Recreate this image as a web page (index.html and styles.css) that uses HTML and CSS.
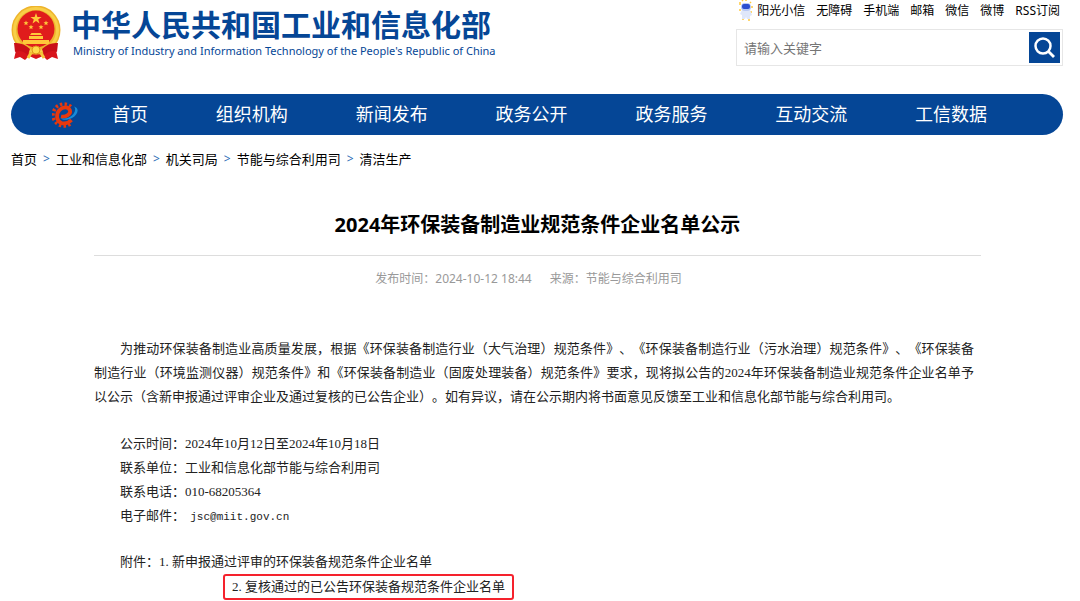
FILE: index.html
```
<!DOCTYPE html>
<html lang="zh-CN">
<head>
    <meta charset="UTF-8">
    <meta name="viewport" content="width=device-width, initial-scale=1.0">
    <title>2024年环保装备制造业规范条件企业名单公示</title>
    <link rel="stylesheet" href="styles.css">
</head>
<body>
    <header class="header">
        <a class="logo" href="#">
            <svg class="emblem" viewBox="0 0 50 54" aria-hidden="true">
                <path d="M7 36 L3 53 L9 51 L14 54 L18 50 L25 53 L32 50 L36 54 L41 51 L47 53 L43 36 Z" fill="#d8141c"/>
                <circle cx="25" cy="24" r="24.5" fill="#eeb42c"/>
                <circle cx="25" cy="24" r="21.500" fill="none" stroke="#f8cf48" stroke-width="3"/>
                <circle cx="25" cy="23" r="18.5" fill="#e01c1c"/>
                <path d="M25 7 L26.4 11 L30.6 11 L27.2 13.5 L28.5 17.5 L25 15 L21.5 17.5 L22.8 13.5 L19.4 11 L23.6 11 Z" fill="#ffc83a"/>
                <g fill="#ffc83a">
                    <path id="star" d="M15 14.500l.7 1.700h1.800l-1.400 1.200.5 1.900-1.600-1.100-1.600 1.100.5-1.900-1.400-1.200h1.800z"/>
                    <use href="#star" x="20"/>
                    <use href="#star" x="5" y="4"/>
                    <use href="#star" x="15" y="4"/>
                    <path d="M19 29 L20.500 27 H29.500 L31 29 Z M18 30 H32 V33 H18 Z M12 34 H38 V38 H12 Z"/>
                </g>
                <path d="M3 37 Q12 36 19 43 L17 49 Q10 43 4 46 Z M47 37 Q38 36 31 43 L33 49 Q40 43 46 46 Z" fill="#c90f18"/>
                <circle cx="25" cy="44" r="4" fill="#ffd84a" stroke="#e0951c"/>
                <path d="M20 47 L17 52 M30 47 L33 52" stroke="#f7c73a" stroke-width="3"/>
            </svg>
            <span class="logo-text">
                <strong>中华人民共和国工业和信息化部</strong>
                <span class="logo-en">Ministry of Industry and Information Technology of the People's Republic of China</span>
            </span>
        </a>
        <div class="header-right">
            <ul class="top-links">
                <li>
                    <a href="#">
                        <svg class="mascot" viewBox="0 0 14 22" aria-hidden="true">
                            <path d="M1 5V2M3 1l1-1M7 1V0M11 2l1 1M13 6v2M1 9v2M12 11v2M4 18v2M10 18v3" stroke="#ffc93c" stroke-width="1.500"/>
                            <path d="M3 10h8l2 5-2 1v3H8l-1-2-1 2H3v-4l-2-1z" fill="#dfe7fa"/>
                            <rect x="2" y="3" width="10" height="8" rx="4" fill="#b9c9f5"/>
                            <rect x="3" y="4" width="8" height="5" rx="2" fill="#2c4fd0"/>
                        </svg>阳光小信</a>
                </li>
                <li><a href="#">无障碍</a></li>
                <li><a href="#">手机端</a></li>
                <li><a href="#">邮箱</a></li>
                <li><a href="#">微信</a></li>
                <li><a href="#">微博</a></li>
                <li><a href="#">RSS订阅</a></li>
            </ul>
            <form class="search">
                <input type="text" placeholder="请输入关键字" aria-label="请输入关键字">
                <button type="button" aria-label="搜索">
                    <svg viewBox="0 0 31 31" aria-hidden="true">
                        <circle cx="14" cy="14" r="7.500" fill="none" stroke="#fff" stroke-width="2.500"/>
                        <path d="M19.500 19.500L25 25" stroke="#fff" stroke-width="2.800"/>
                    </svg>
                </button>
            </form>
        </div>
    </header>

    <nav class="nav">
        <svg class="nav-logo" viewBox="0 0 26 26" fill="none" aria-hidden="true">
            <path d="M19 4.500 A11 11 0 1 0 19 21.500" stroke="#e8380d" stroke-width="3.500" stroke-dasharray="2.400 2.200"/>
            <path d="M9 14.500 C14 15.500 19 12 18 8.500 C16.500 4.500 11 4.500 7.500 8 C3.500 12.500 4.500 19 9.500 21 C13 22.300 16.500 21 19.500 18" stroke="#e8380d" stroke-width="3.800"/>
            <path d="M22 4.500 C28 6 26 13 20 16 C16 18 11 18.500 9 16.500 C15 17 20 14.500 22 11 C23.500 8.500 23.500 6 22 4.500 Z" fill="#168bd8"/>
        </svg>
        <a class="home" href="#">首页</a>
        <a href="#">组织机构</a>
        <a href="#">新闻发布</a>
        <a href="#">政务公开</a>
        <a href="#">政务服务</a>
        <a href="#">互动交流</a>
        <a href="#">工信数据</a>
    </nav>

    <div class="crumbs">
        <a href="#">首页</a><span>&gt;</span>
        <a href="#">工业和信息化部</a><span>&gt;</span>
        <a href="#">机关司局</a><span>&gt;</span>
        <a href="#">节能与综合利用司</a><span>&gt;</span>
        <a href="#">清洁生产</a>
    </div>

    <main class="article">
        <h1>2024年环保装备制造业规范条件企业名单公示</h1>
        <div class="info">
            <span>发布时间：2024-10-12 18:44</span>
            <span>来源：节能与综合利用司</span>
        </div>
        <div class="content">
            <p class="intro">为推动环保装备制造业高质量发展，根据《环保装备制造行业（大气治理）规范条件》、《环保装备制造行业（污水治理）规范条件》、《环保装备制造行业（环境监测仪器）规范条件》和《环保装备制造业（固废处理装备）规范条件》要求，现将拟公告的2024年环保装备制造业规范条件企业名单予以公示（含新申报通过评审企业及通过复核的已公告企业）。如有异议，请在公示期内将书面意见反馈至工业和信息化部节能与综合利用司。</p>
            <ul class="contact">
                <li>公示时间：2024年10月12日至2024年10月18日</li>
                <li>联系单位：工业和信息化部节能与综合利用司</li>
                <li>联系电话：010-68205364</li>
                <li>电子邮件： <span class="mail">jsc@miit.gov.cn</span></li>
            </ul>
            <div class="files">
                <div>附件：<a href="#">1. 新申报通过评审的环保装备规范条件企业名单</a></div>
                <a class="marked" href="#">2. 复核通过的已公告环保装备规范条件企业名单</a>
            </div>
        </div>
    </main>
</body>
</html>
```
FILE: styles.css
```
* {
    margin: 0;
    padding: 0;
    box-sizing: border-box;
}
body {
    padding: 0 17px 0 11px;
    background-color: #fff;
    color: #000;
    font-family: "Noto Sans", "Noto Sans CJK SC", sans-serif;
    font-size: 13px;
    text-spacing-trim: space-all;
}
a {
    color: inherit;
    text-decoration: none;
}
ul {
    list-style: none;
}
.header {
    display: flex;
    justify-content: space-between;
    height: 94px;
}
.logo {
    display: flex;
    align-items: flex-start;
    gap: 10px;
    padding-top: 6px;
    color: #054696;
}
.emblem {
    width: 50px;
    height: 54px;
}
.logo-text {
    display: flex;
    flex-direction: column;
    white-space: nowrap;
}
.logo-text strong {
    font-size: 30px;
    line-height: 38px;
}
.logo-en {
    padding-left: 2px;
    font-family: "Noto Sans", sans-serif;
    font-size: 11px;
    line-height: 13px;
}
.header-right {
    width: 327px;
}
.top-links {
    display: flex;
    justify-content: flex-end;
    gap: 11px;
    height: 29px;
    padding-right: 3px;
    font-size: 12px;
    line-height: 22px;
    white-space: nowrap;
}
.top-links a {
    display: flex;
}
.mascot {
    width: 14px;
    height: 22px;
    margin-right: 4px;
}
.search {
    display: flex;
    height: 37px;
    padding: 2px;
    border: 1px solid #e6e6e6;
}
.search input {
    flex: 1;
    min-width: 0;
    padding-left: 5px;
    border: none;
    outline: none;
    font: inherit;
}
.search input::placeholder {
    color: #757575;
}
.search button {
    width: 31px;
    height: 31px;
    border: none;
    background-color: #054696;
    cursor: pointer;
}
.search svg {
    display: block;
}
.nav {
    display: flex;
    align-items: center;
    height: 41px;
    padding: 0 42px 0 41px;
    border-radius: 21px;
    background-color: #054696;
    color: #fff;
    font-size: 18px;
}
.nav-logo {
    flex: none;
    width: 26px;
    height: 26px;
}
.nav a {
    flex: 140;
    padding-bottom: 3px;
    text-align: center;
}
.nav .home {
    flex: 104;
}
.crumbs {
    display: flex;
    padding: 12px 0 1px;
    line-height: 24px;
}
.crumbs span {
    padding: 0 6px;
    color: #2a6cb5;
    font-size: 12px;
}
.article {
    padding: 0 82px 0 83px;
}
.article h1 {
    padding: 38px 0 15px;
    border-bottom: 1px solid #ddd;
    font-size: 20px;
    line-height: 30px;
    text-align: center;
}
.info {
    display: flex;
    justify-content: center;
    gap: 18px;
    padding: 12px 18px 0 0;
    color: #999;
    font-size: 12px;
    line-height: 22px;
}
.content {
    padding: 47px 7px 0 0;
    color: #222;
    font-family: "Liberation Serif", "Noto Sans CJK SC", serif;
    line-height: 24px;
}
.intro {
    text-indent: 2em;
    text-align: justify;
}
.contact {
    padding: 23px 26px 22px;
}
.mail {
    margin-left: 2px;
    font-family: "Liberation Mono", monospace;
    font-size: 11px;
    line-height: 1;
}
.files {
    padding-left: 26px;
}
.marked {
    display: block;
    width: fit-content;
    margin-left: 103px;
    padding: 0 7px;
    border: 2px solid #f5222d;
    border-radius: 3px;
    line-height: 22px;
}
```
